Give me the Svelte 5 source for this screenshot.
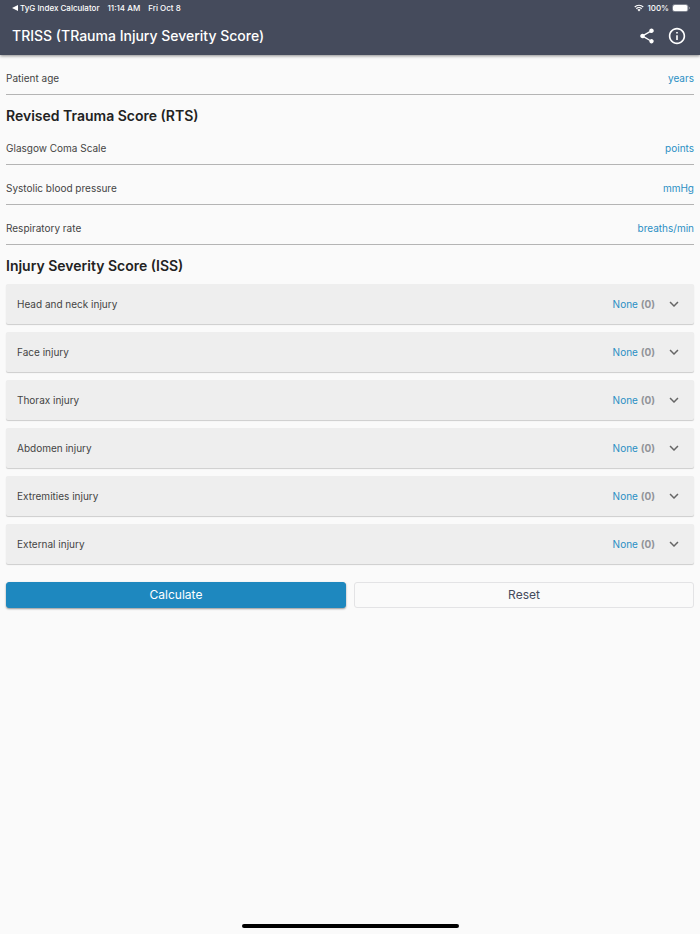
<script lang="ts">
    type Field = { id: string; label: string; unit: string };

    const patientFields: Field[] = [
        { id: "age", label: "Patient age", unit: "years" },
    ];

    const rtsFields: Field[] = [
        { id: "gcs", label: "Glasgow Coma Scale", unit: "points" },
        { id: "sbp", label: "Systolic blood pressure", unit: "mmHg" },
        { id: "rr", label: "Respiratory rate", unit: "breaths/min" },
    ];

    const regions = ["Head and neck", "Face", "Thorax", "Abdomen", "Extremities", "External"];
    const grades = ["None", "Minor", "Moderate", "Serious", "Severe", "Critical", "Unsurvivable"];

    let values: Record<string, string> = $state({ age: "", gcs: "", sbp: "", rr: "" });
    let injuries = $state(regions.map(() => 0));
    let open = $state(-1);

    function reset() {
        for (const id in values) values[id] = "";
        injuries = regions.map(() => 0);
        open = -1;
    }
</script>

{#snippet fieldRow(field: Field)}
    <div class="field">
        <label for={field.id}>{field.label}</label>
        <input id={field.id} type="text" inputmode="numeric" bind:value={values[field.id]} />
        <span class="unit">{field.unit}</span>
    </div>
{/snippet}

<div class="screen">
    <header>
        <div class="status-bar">
            <a href="#back">
                <svg class="back" viewBox="0 0 6 6" aria-hidden="true"><path d="M6 0v6L0 3z" /></svg>
                TyG Index Calculator
            </a>
            <span>11:14 AM</span>
            <span>Fri Oct 8</span>
            <div class="system">
                <svg class="wifi" viewBox="0 0 20 15" aria-hidden="true">
                    <path d="M1.5 5.5a12 12 0 0 1 17 0M4.7 9a7.5 7.5 0 0 1 10.6 0" />
                    <path class="dot" d="M6.8 11.2a4.5 4.5 0 0 1 6.4 0L10 14.6z" />
                </svg>
                <span>100%</span>
                <svg class="battery" viewBox="0 0 36 16" aria-hidden="true">
                    <rect class="shell" x="1" y="1" width="31" height="14" rx="4" />
                    <rect x="2" y="2" width="29" height="12" rx="3" />
                    <path class="cap" d="M34 5.5q2 1 2 2.5t-2 2.5z" />
                </svg>
            </div>
        </div>
        <div class="app-bar">
            <h1>TRISS (TRauma Injury Severity Score)</h1>
            <button class="icon" type="button" aria-label="Share">
                <svg viewBox="0 0 24 24"><path d="M18 16.08c-.76 0-1.44.3-1.96.77L8.91 12.7c.05-.23.09-.46.09-.7s-.04-.47-.09-.7l7.05-4.11c.54.5 1.25.81 2.04.81 1.66 0 3-1.34 3-3s-1.34-3-3-3-3 1.34-3 3c0 .24.04.47.09.7L8.04 9.81C7.5 9.31 6.79 9 6 9c-1.66 0-3 1.34-3 3s1.34 3 3 3c.79 0 1.5-.31 2.04-.81l7.12 4.16c-.05.21-.08.43-.08.65 0 1.61 1.31 2.92 2.92 2.92s2.92-1.31 2.92-2.92-1.31-2.92-2.92-2.92z" /></svg>
            </button>
            <button class="icon" type="button" aria-label="Information">
                <svg viewBox="1 1 22 22"><path d="M11 7h2v2h-2zm0 4h2v6h-2zm1-9C6.48 2 2 6.48 2 12s4.48 10 10 10 10-4.48 10-10S17.52 2 12 2zm0 18c-4.41 0-8-3.59-8-8s3.59-8 8-8 8 3.59 8 8-3.59 8-8 8z" /></svg>
            </button>
        </div>
    </header>

    <main>
        {#each patientFields as field (field.id)}
            {@render fieldRow(field)}
        {/each}

        <h2>Revised Trauma Score (RTS)</h2>
        {#each rtsFields as field (field.id)}
            {@render fieldRow(field)}
        {/each}

        <h2 class="iss">Injury Severity Score (ISS)</h2>
        <div class="panels">
            {#each regions as region, i (region)}
                <section class="panel">
                    <button
                        class="panel-header"
                        type="button"
                        aria-expanded={open === i}
                        onclick={() => (open = open === i ? -1 : i)}
                    >
                        <span class="name">{region} injury</span>
                        <span class="grade">{grades[injuries[i]]} <b>({injuries[i]})</b></span>
                        <svg class="chevron" class:flipped={open === i} viewBox="0 0 24 24" aria-hidden="true">
                            <path d="M16.59 8.59 12 13.17 7.41 8.59 6 10l6 6 6-6z" />
                        </svg>
                    </button>
                    {#if open === i}
                        <div class="options">
                            {#each grades as grade, score (grade)}
                                <label>
                                    <input type="radio" name={region} value={score} bind:group={injuries[i]} />
                                    {grade} ({score})
                                </label>
                            {/each}
                        </div>
                    {/if}
                </section>
            {/each}
        </div>

        <div class="actions">
            <button class="calculate" type="button">Calculate</button>
            <button class="reset" type="button" onclick={reset}>Reset</button>
        </div>
    </main>

    <div class="home-indicator"></div>
</div>

<style>
    :global(body) {
        margin: 0;
        background: #fafafa;
    }

    .screen {
        min-height: 100vh;
        display: flex;
        flex-direction: column;
        font-family: Inter, "Liberation Sans", sans-serif;
        font-size: 10px;
        line-height: 16px;
        color: #444;
    }

    button,
    input {
        font: inherit;
        color: inherit;
        margin: 0;
        padding: 0;
        border: 0;
        background: none;
    }

    button {
        cursor: pointer;
    }

    svg {
        display: block;
        flex: none;
        fill: currentColor;
    }

    header {
        background: #454b5c;
        color: #fff;
        box-shadow: 0 1px 3px rgba(0, 0, 0, 0.45);
    }

    .status-bar {
        display: flex;
        align-items: center;
        gap: 8px;
        padding: 0 10px 0 12px;
        font-size: 8px;
        font-weight: 500;
    }

    .status-bar a {
        display: flex;
        align-items: center;
        gap: 2px;
        color: inherit;
        text-decoration: none;
    }

    .back {
        width: 6px;
        height: 6px;
    }

    .system {
        display: flex;
        align-items: center;
        gap: 3px;
        margin-left: auto;
    }

    .wifi {
        width: 10px;
        height: 8px;
    }

    .wifi path {
        fill: none;
        stroke: currentColor;
        stroke-width: 2.4;
    }

    .wifi .dot {
        fill: currentColor;
        stroke: none;
    }

    .battery {
        width: 18px;
        height: 8px;
    }

    .battery .shell {
        fill: none;
        stroke: #9296a0;
        stroke-width: 1.5;
    }

    .battery .cap {
        fill: #9296a0;
    }

    .app-bar {
        display: flex;
        align-items: center;
        gap: 12px;
        height: 39px;
        padding: 0 14px 0 12px;
    }

    h1 {
        flex: 1;
        margin: 0;
        font-size: 14px;
        font-weight: 500;
    }

    .icon svg {
        width: 18px;
        height: 18px;
    }

    main {
        padding: 0 6px;
    }

    .field {
        display: flex;
        align-items: center;
        gap: 8px;
        height: 40px;
        padding-top: 6px;
        box-sizing: border-box;
        border-bottom: 1px solid #b4b4b4;
    }

    .field input {
        flex: 1;
        min-width: 0;
        text-align: right;
        outline: none;
    }

    .unit,
    .grade {
        color: #2a8fc4;
    }

    h2 {
        margin: 0;
        padding-top: 12px;
        font-size: 14px;
        font-weight: 600;
        line-height: 18px;
        color: #222;
    }

    .iss {
        padding-bottom: 9px;
    }

    .panels {
        display: flex;
        flex-direction: column;
        gap: 8px;
    }

    .panel {
        background: #eee;
        border-radius: 2px;
        box-shadow: 0 1px 1px rgba(0, 0, 0, 0.18);
    }

    .panel-header {
        display: flex;
        align-items: center;
        width: 100%;
        height: 40px;
        padding: 0 11px;
        text-align: left;
    }

    .name {
        flex: 1;
    }

    .grade b {
        font-weight: 700;
        color: #929499;
    }

    .chevron {
        width: 18px;
        height: 18px;
        margin-left: 10px;
        color: #666;
    }

    .flipped {
        transform: rotate(180deg);
    }

    .options {
        display: flex;
        flex-direction: column;
        gap: 8px;
        padding: 4px 11px 12px;
    }

    .options label {
        display: flex;
        align-items: center;
        gap: 8px;
    }

    .actions {
        display: flex;
        gap: 8px;
        padding: 18px 0;
    }

    .actions button {
        flex: 1;
        height: 26px;
        box-sizing: border-box;
        border: 1px solid #e3e3e5;
        border-radius: 3px;
        font-size: 12px;
        color: #454b5c;
    }

    .actions .calculate {
        border-color: #1e88bf;
        background: #1e88bf;
        color: #fff;
        box-shadow: 0 1px 2px rgba(0, 0, 0, 0.4);
    }

    .home-indicator {
        width: 31%;
        height: 4px;
        margin: auto auto 6px;
        border-radius: 2px;
        background: #000;
    }
</style>
